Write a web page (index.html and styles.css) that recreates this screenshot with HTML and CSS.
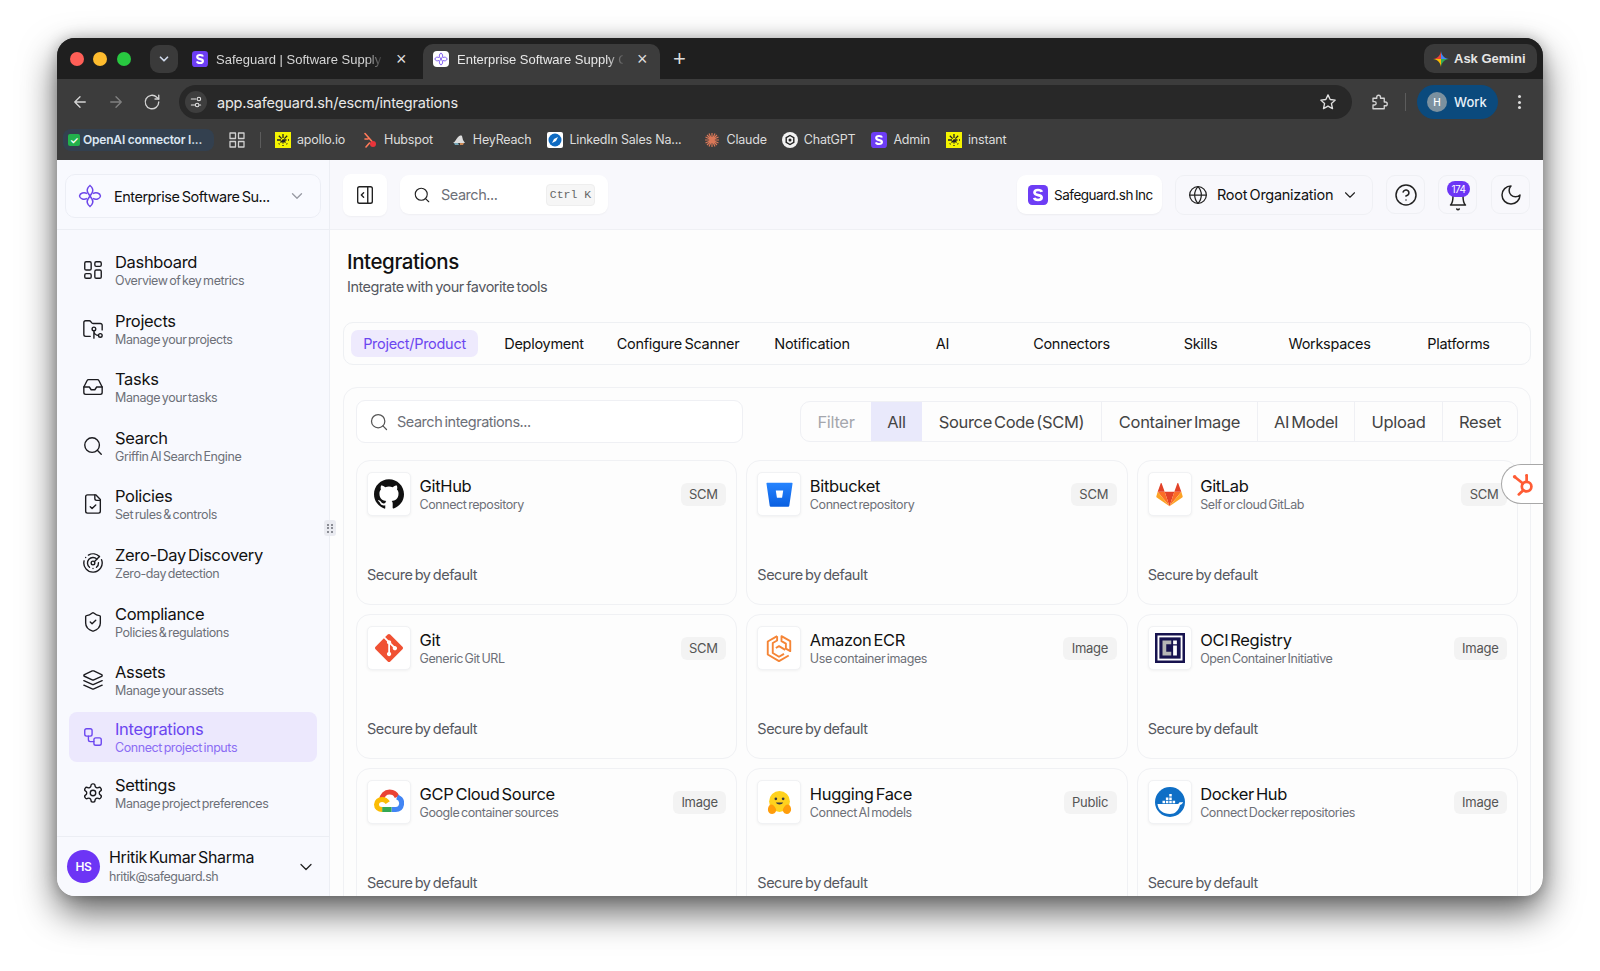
FILE: index.html
```html
<!DOCTYPE html>
<html lang="en">
<head>
    <meta charset="UTF-8">
    <meta name="viewport" content="width=device-width, initial-scale=1.0">
    <title>Integrations - Safeguard</title>
    <link rel="stylesheet" href="styles.css">
</head>
<body>
    <!-- shared icons -->
    <svg class="sprite" xmlns="http://www.w3.org/2000/svg">
        <symbol id="i-search" viewBox="0 0 24 24"><circle cx="11" cy="11" r="8"/><path d="m21 21-4.3-4.3"/></symbol>
        <symbol id="i-chevron" viewBox="0 0 24 24"><path d="m6 9 6 6 6-6"/></symbol>
        <symbol id="logo-s" viewBox="0 0 24 24"><rect width="24" height="24" rx="5" fill="#6d3df5" stroke="none"/><path d="M16.5 8.2C16 6.6 14.4 6 12 6 9.5 6 7.8 7 7.8 9c0 4.5 8.6 1.8 8.6 6 0 2.1-1.9 3-4.4 3-2.5 0-4.100-.8-4.600-2.500" fill="none" stroke="#fff" stroke-width="3.2"/></symbol>
        <symbol id="logo-knot" viewBox="0 0 24 24"><path d="M12 1.500C9 4 8.500 6.500 10 9l4 6c1.500 2.500 1 5-2 7.500C9 20 8.500 17.500 10 15l4-6c1.500-2.500 1-5-2-7.500z"/><path d="M9 9.500C6 8 2 9 1.500 12c.5 3 4.500 4 7.500 2.500"/><path d="M15 9.500c3-1.500 7-.5 7.500 2.500-.5 3-4.500 4-7.500 2.500"/></symbol>
        <symbol id="logo-apollo" viewBox="0 0 16 16"><rect width="16" height="16" fill="#f4f400" stroke="none"/><path d="M8 2v12M2 8h12M3.800 3.800l8.400 8.400M12.200 3.800l-8.400 8.400" fill="none" stroke="#222" stroke-width="1.3" stroke-dasharray="4 1.5"/></symbol>
    </svg>

    <div class="stage">
        <div class="window">
            <!-- browser chrome -->
            <div class="titlebar">
                <span class="light light-red"></span>
                <span class="light light-yellow"></span>
                <span class="light light-green"></span>
                <span class="tab-list"><svg class="ico ico-14 bold"><use href="#i-chevron"/></svg></span>
                <div class="tab tab-idle">
                    <svg class="favicon"><use href="#logo-s"/></svg>
                    <span class="tab-text">Safeguard | Software Supply C</span>
                    <span class="tab-close">×</span>
                </div>
                <div class="tab tab-active">
                    <span class="favicon favicon-white"><svg class="knot-mini"><use href="#logo-knot"/></svg></span>
                    <span class="tab-text">Enterprise Software Supply C</span>
                    <span class="tab-close">×</span>
                </div>
                <span class="tab-new">+</span>
                <div class="gemini">
                    <svg class="gemini-star" viewBox="0 0 24 24">
                        <path d="M12 0c.6 6.500 5.500 11.400 12 12H12V0z" fill="#4285f4"/>
                        <path d="M12 0C11.400 6.500 6.500 11.400 0 12h12V0z" fill="#ea4335"/>
                        <path d="M0 12c6.500.6 11.400 5.500 12 12V12H0z" fill="#fbbc04"/>
                        <path d="M12 24c.6-6.500 5.500-11.400 12-12H12v12z" fill="#34a853"/>
                    </svg>
                    Ask Gemini
                </div>
            </div>

            <div class="toolbar">
                <span class="tool-btn"><svg class="ico ico-18" viewBox="0 0 24 24"><path d="M19 12H5M12 19l-7-7 7-7"/></svg></span>
                <span class="tool-btn tool-dim"><svg class="ico ico-18" viewBox="0 0 24 24"><path d="M5 12h14M12 5l7 7-7 7"/></svg></span>
                <span class="tool-btn"><svg class="ico ico-18" viewBox="0 0 24 24"><path d="M21 12a9 9 0 1 1-2.700-6.400L21 8"/><path d="M21 3v5h-5"/></svg></span>
                <div class="omnibox">
                    <span class="tune"><svg class="ico ico-14" viewBox="0 0 24 24"><path d="M4 7h8M4 17h6M18 17h2"/><circle cx="17" cy="7" r="3"/><circle cx="14" cy="17" r="3"/></svg></span>
                    <span class="url">app.safeguard.sh/escm/integrations</span>
                    <svg class="ico ico-18 star" viewBox="0 0 24 24"><path d="M12 2.500l2.900 6.200 6.700.8-5 4.600 1.400 6.700-6-3.400-6 3.400 1.400-6.700-5-4.600 6.700-.8z"/></svg>
                </div>
                <svg class="ico ico-18 puzzle" viewBox="0 0 24 24"><path d="M4 7h5V5.500a2.500 2.500 0 0 1 5 0V7h5v5h1.500a2.500 2.500 0 0 1 0 5H19v4H4v-5h2a2 2 0 0 0 0-4.500H4z"/></svg>
                <span class="tool-sep"></span>
                <div class="work-pill"><span class="work-avatar">H</span>Work</div>
                <span class="tool-dots"><i></i><i></i><i></i></span>
            </div>

            <div class="bookmarks">
                <span class="bm-chip"><span class="bm-check">✓</span>OpenAI connector I...</span>
                <svg class="bm-apps ico" viewBox="0 0 16 16"><rect x="1" y="1" width="5.5" height="5.5"/><rect x="9.500" y="1" width="5.5" height="5.5"/><rect x="1" y="9.500" width="5.5" height="5.5"/><rect x="9.500" y="9.500" width="5.5" height="5.5"/></svg>
                <span class="bm-sep"></span>
                <span class="bm bm-apollo"><svg class="bm-icon"><use href="#logo-apollo"/></svg>apollo.io</span>
                <span class="bm bm-hubspot"><svg class="bm-icon" viewBox="0 0 16 16"><path d="M3 1.500l7 8M3 7h3M4 15l3.500-4" fill="none" stroke="#ff7a59" stroke-width="1.6" stroke-linecap="round"/><circle cx="11" cy="12" r="3" fill="#e8343b"/></svg>Hubspot</span>
                <span class="bm bm-heyreach"><svg class="bm-icon" viewBox="0 0 16 16"><path d="M2 11c2-1 3-4 5-6 1-1 3-2 4-1l1 4 2 3z" fill="#ddd"/><path d="M3 11h4l1 2H4z" fill="#7ab"/><path d="M9 11h4l-1 2H9z" fill="#c85"/></svg>HeyReach</span>
                <span class="bm bm-linkedin"><svg class="bm-icon" viewBox="0 0 16 16"><rect width="16" height="16" rx="2" fill="#fff"/><circle cx="8" cy="8" r="6.5" fill="#0f6bc2"/><path d="M11 5l-2 4-4 2 2-4z" fill="#fff"/></svg>LinkedIn Sales Na...</span>
                <span class="bm bm-claude"><svg class="bm-icon" viewBox="0 0 16 16"><path d="M8 1v14M1 8h14M3 3l10 10M13 3L3 13M5 1.500l6 13M11 1.500l-6 13M1.500 5l13 6M14.500 5l-13 6" stroke="#d97757" stroke-width="1.2"/></svg>Claude</span>
                <span class="bm bm-chatgpt"><svg class="bm-icon" viewBox="0 0 16 16"><circle cx="8" cy="8" r="8" fill="#f1f1f1"/><path d="M8 3.500l3.800 2.200v4.600L8 12.500l-3.800-2.200V5.700z" fill="none" stroke="#222" stroke-width="1.4"/><circle cx="8" cy="8" r="1.5" fill="#222"/></svg>ChatGPT</span>
                <span class="bm bm-admin"><svg class="bm-icon"><use href="#logo-s"/></svg>Admin</span>
                <span class="bm bm-instant"><svg class="bm-icon"><use href="#logo-apollo"/></svg>instant</span>
            </div>

            <!-- application -->
            <div class="app">
                <aside class="sidebar">
                    <div class="side-head">
                        <div class="project-select">
                            <svg class="knot"><use href="#logo-knot"/></svg>
                            <span class="project-name">Enterprise Software Su...</span>
                            <svg class="ico ico-18 muted"><use href="#i-chevron"/></svg>
                        </div>
                    </div>
                    <nav class="nav">
                        <a class="nav-item">
                            <svg class="nav-icon" viewBox="0 0 24 24"><rect x="3" y="3" width="7" height="9" rx="1.5"/><rect x="14" y="3" width="7" height="5" rx="1.5"/><rect x="14" y="12" width="7" height="9" rx="1.5"/><rect x="3" y="16" width="7" height="5" rx="1.5"/></svg>
                            <span class="nav-text"><b>Dashboard</b><small>Overview of key metrics</small></span>
                        </a>
                        <a class="nav-item">
                            <svg class="nav-icon" viewBox="0 0 24 24"><path d="M9 20H4a2 2 0 0 1-2-2V5a2 2 0 0 1 2-2h3.900a2 2 0 0 1 1.690.9l.81 1.200a2 2 0 0 0 1.670.9H20a2 2 0 0 1 2 2v5"/><circle cx="13" cy="12" r="2"/><path d="M18 19c-2.800 0-5-2.200-5-5v8"/><circle cx="20" cy="19" r="2"/></svg>
                            <span class="nav-text"><b>Projects</b><small>Manage your projects</small></span>
                        </a>
                        <a class="nav-item">
                            <svg class="nav-icon" viewBox="0 0 24 24"><path d="M22 12h-6l-2 3h-4l-2-3H2"/><path d="M5.450 5.110 2 12v6a2 2 0 0 0 2 2h16a2 2 0 0 0 2-2v-6l-3.450-6.890A2 2 0 0 0 16.760 4H7.240a2 2 0 0 0-1.790 1.110z"/></svg>
                            <span class="nav-text"><b>Tasks</b><small>Manage your tasks</small></span>
                        </a>
                        <a class="nav-item">
                            <svg class="nav-icon"><use href="#i-search"/></svg>
                            <span class="nav-text"><b>Search</b><small>Griffin AI Search Engine</small></span>
                        </a>
                        <a class="nav-item">
                            <svg class="nav-icon" viewBox="0 0 24 24"><path d="M15 2H6a2 2 0 0 0-2 2v16a2 2 0 0 0 2 2h12a2 2 0 0 0 2-2V7Z"/><path d="M14 2v4a2 2 0 0 0 2 2h4"/><path d="m9 15 2 2 4-4"/></svg>
                            <span class="nav-text"><b>Policies</b><small>Set rules &amp; controls</small></span>
                        </a>
                        <a class="nav-item">
                            <svg class="nav-icon" viewBox="0 0 24 24"><path d="M19.070 4.930A10 10 0 0 0 6.990 3.340"/><path d="M4 6h.01"/><path d="M2.290 9.620A10 10 0 1 0 21.310 8.350"/><path d="M16.240 7.760A6 6 0 1 0 8.230 16.670"/><path d="M12 18h.01"/><path d="M17.990 11.660A6 6 0 0 1 15.770 16.670"/><circle cx="12" cy="12" r="2"/><path d="m13.410 10.590 5.660-5.660"/></svg>
                            <span class="nav-text"><b>Zero-Day Discovery</b><small>Zero-day detection</small></span>
                        </a>
                        <a class="nav-item">
                            <svg class="nav-icon" viewBox="0 0 24 24"><path d="M20 13c0 5-3.500 7.500-7.660 8.950a1 1 0 0 1-.67-.01C7.500 20.500 4 18 4 13V6a1 1 0 0 1 1-1c2 0 4.500-1.200 6.240-2.720a1.170 1.170 0 0 1 1.520 0C14.510 3.810 17 5 19 5a1 1 0 0 1 1 1z"/><path d="m9 12 2 2 4-4"/></svg>
                            <span class="nav-text"><b>Compliance</b><small>Policies &amp; regulations</small></span>
                        </a>
                        <a class="nav-item">
                            <svg class="nav-icon" viewBox="0 0 24 24"><path d="M12.830 2.180a2 2 0 0 0-1.660 0L2.600 6.080a1 1 0 0 0 0 1.830l8.580 3.910a2 2 0 0 0 1.660 0l8.580-3.900a1 1 0 0 0 0-1.830Z"/><path d="m22 17.650-9.170 4.160a2 2 0 0 1-1.660 0L2 17.650"/><path d="m22 12.650-9.170 4.160a2 2 0 0 1-1.660 0L2 12.650"/></svg>
                            <span class="nav-text"><b>Assets</b><small>Manage your assets</small></span>
                        </a>
                        <a class="nav-item nav-active">
                            <svg class="nav-icon" viewBox="0 0 24 24"><rect x="3" y="3" width="8" height="8" rx="2"/><path d="M7 11v4a2 2 0 0 0 2 2h4"/><rect x="13" y="13" width="8" height="8" rx="2"/></svg>
                            <span class="nav-text"><b>Integrations</b><small>Connect project inputs</small></span>
                        </a>
                        <a class="nav-item">
                            <svg class="nav-icon" viewBox="0 0 24 24"><path d="M12.220 2h-.44a2 2 0 0 0-2 2v.18a2 2 0 0 1-1 1.730l-.43.25a2 2 0 0 1-2 0l-.15-.08a2 2 0 0 0-2.730.73l-.22.38a2 2 0 0 0 .73 2.730l.15.1a2 2 0 0 1 1 1.720v.51a2 2 0 0 1-1 1.740l-.15.09a2 2 0 0 0-.73 2.730l.22.38a2 2 0 0 0 2.730.73l.15-.08a2 2 0 0 1 2 0l.43.25a2 2 0 0 1 1 1.730V20a2 2 0 0 0 2 2h.44a2 2 0 0 0 2-2v-.18a2 2 0 0 1 1-1.730l.43-.25a2 2 0 0 1 2 0l.15.08a2 2 0 0 0 2.730-.73l.22-.39a2 2 0 0 0-.73-2.730l-.15-.08a2 2 0 0 1-1-1.740v-.5a2 2 0 0 1 1-1.740l.15-.09a2 2 0 0 0 .73-2.730l-.22-.38a2 2 0 0 0-2.730-.73l-.15.08a2 2 0 0 1-2 0l-.43-.25a2 2 0 0 1-1-1.730V4a2 2 0 0 0-2-2z"/><circle cx="12" cy="12" r="3"/></svg>
                            <span class="nav-text"><b>Settings</b><small>Manage project preferences</small></span>
                        </a>
                    </nav>
                    <div class="profile">
                        <span class="avatar">HS</span>
                        <span class="profile-text"><b>Hritik Kumar Sharma</b><small>hritik@safeguard.sh</small></span>
                        <svg class="ico ico-20 dark"><use href="#i-chevron"/></svg>
                    </div>
                </aside>

                <main class="main">
                    <header class="topbar">
                        <span class="collapse-btn"><svg class="ico ico-22 dark" viewBox="0 0 24 24"><rect x="4" y="3" width="16" height="18" rx="2"/><path d="M15 3v18M10.500 9.500 8 12l2.500 2.500"/></svg></span>
                        <div class="top-search">
                            <svg class="ico ico-18 dark"><use href="#i-search"/></svg>
                            <span class="top-search-text">Search...</span>
                            <kbd class="kbd">Ctrl K</kbd>
                        </div>
                        <div class="org-chip">
                            <svg class="org-logo"><use href="#logo-s"/></svg>
                            Safeguard.sh Inc
                        </div>
                        <div class="org-select">
                            <svg class="ico ico-20 dark" viewBox="0 0 24 24"><circle cx="12" cy="12" r="10"/><path d="M12 2a14.500 14.500 0 0 0 0 20 14.500 14.500 0 0 0 0-20"/><path d="M2 12h20"/></svg>
                            <span class="org-name">Root Organization</span>
                            <svg class="ico ico-18 dark"><use href="#i-chevron"/></svg>
                        </div>
                        <span class="icon-btn"><svg class="ico ico-24 dark" viewBox="0 0 24 24"><circle cx="12" cy="12" r="10"/><path d="M9.090 9a3 3 0 0 1 5.830 1c0 2-3 3-3 3"/><path d="M12 17h.01"/></svg></span>
                        <span class="icon-btn icon-bell">
                            <svg class="ico ico-24 dark" viewBox="0 0 24 24"><path d="M7 8a5 5 0 0 1 10 0c0 7 2.500 9 2.500 9h-15S7 15 7 8"/><path d="M10.800 21a1.400 1.400 0 0 0 2.400 0"/></svg>
                            <span class="bell-badge">174</span>
                        </span>
                        <span class="icon-btn"><svg class="ico ico-24 dark" viewBox="0 0 24 24"><path d="M12 3a6 6 0 0 0 9 9 9 9 0 1 1-9-9Z"/></svg></span>
                    </header>

                    <section class="content">
                        <h1 class="page-title">Integrations</h1>
                        <p class="page-sub">Integrate with your favorite tools</p>

                        <div class="tabs">
                            <span class="tab-item tab-item-on">Project/Product</span>
                            <span class="tab-item">Deployment</span>
                            <span class="tab-item">Configure Scanner</span>
                            <span class="tab-item">Notification</span>
                            <span class="tab-item">AI</span>
                            <span class="tab-item">Connectors</span>
                            <span class="tab-item">Skills</span>
                            <span class="tab-item">Workspaces</span>
                            <span class="tab-item">Platforms</span>
                        </div>

                        <div class="panel">
                            <div class="panel-bar">
                                <div class="int-search">
                                    <svg class="ico ico-20 muted-dark"><use href="#i-search"/></svg>
                                    Search integrations...
                                </div>
                                <div class="segments">
                                    <span class="seg seg-filter">Filter</span>
                                    <span class="seg seg-all">All</span>
                                    <span class="seg seg-scm">Source Code (SCM)</span>
                                    <span class="seg seg-image">Container Image</span>
                                    <span class="seg seg-model">AI Model</span>
                                    <span class="seg seg-upload">Upload</span>
                                    <span class="seg seg-reset">Reset</span>
                                </div>
                            </div>

                            <div class="cards">
                                <article class="card">
                                    <div class="card-head">
                                        <span class="logo-box"><svg class="logo" viewBox="0 0 24 24"><path fill="#111" d="M12 .297c-6.630 0-12 5.373-12 12 0 5.303 3.438 9.800 8.205 11.385.6.113.82-.258.82-.577 0-.285-.01-1.040-.015-2.040-3.338.724-4.042-1.610-4.042-1.610C4.422 18.070 3.633 17.700 3.633 17.700c-1.087-.744.084-.729.084-.729 1.205.084 1.838 1.236 1.838 1.236 1.070 1.835 2.809 1.305 3.495.998.108-.776.417-1.305.76-1.605-2.665-.3-5.466-1.332-5.466-5.930 0-1.310.465-2.380 1.235-3.220-.135-.303-.54-1.523.105-3.176 0 0 1.005-.322 3.300 1.230.96-.267 1.980-.399 3-.405 1.020.006 2.040.138 3 .405 2.280-1.552 3.285-1.230 3.285-1.230.645 1.653.24 2.873.12 3.176.765.84 1.230 1.910 1.230 3.220 0 4.610-2.805 5.625-5.475 5.920.42.36.81 1.096.81 2.220 0 1.606-.015 2.896-.015 3.286 0 .315.21.69.825.57C20.565 22.092 24 17.592 24 12.297c0-6.627-5.373-12-12-12"/></svg></span>
                                        <div class="card-text"><h3>GitHub</h3><p>Connect repository</p></div>
                                        <span class="badge">SCM</span>
                                    </div>
                                    <div class="card-foot">Secure by default</div>
                                </article>
                                <article class="card">
                                    <div class="card-head">
                                        <span class="logo-box"><svg class="logo logo-sm" viewBox="0 0 24 24"><defs><linearGradient id="bb" x1="0" y1="0" x2="0" y2="1"><stop offset="0" stop-color="#2684ff"/><stop offset="1" stop-color="#0a5fe0"/></linearGradient></defs><path fill="url(#bb)" d="M1 1.500h22a.6.6 0 0 1 .6.7L20.700 22a1 1 0 0 1-1 .8H4.300a1 1 0 0 1-1-.8L.4 2.200a.6.6 0 0 1 .6-.7z"/><path fill="#fff" d="M8.700 8.500h6.600l-1 6.300H9.700z"/></svg></span>
                                        <div class="card-text"><h3>Bitbucket</h3><p>Connect repository</p></div>
                                        <span class="badge">SCM</span>
                                    </div>
                                    <div class="card-foot">Secure by default</div>
                                </article>
                                <article class="card">
                                    <div class="card-head">
                                        <span class="logo-box"><svg class="logo logo-sm" viewBox="0 0 24 24"><path fill="#e24329" d="M12 22.500 7.700 9.500h8.600z"/><path fill="#fc6d26" d="M12 22.500 7.700 9.500H1.500z"/><path fill="#fca326" d="M1.500 9.500.3 13.600c-.1.4 0 .8.400 1L12 22.500z"/><path fill="#e24329" d="M1.500 9.500h6.200L5 2c-.1-.4-.7-.4-.8 0z"/><path fill="#fc6d26" d="M12 22.500l4.300-13h6.200z"/><path fill="#fca326" d="M22.500 9.500l1.200 4.100c.1.4 0 .8-.4 1L12 22.500z"/><path fill="#e24329" d="M22.500 9.500h-6.200L19 2c.1-.4.7-.4.8 0z"/></svg></span>
                                        <div class="card-text"><h3>GitLab</h3><p>Self or cloud GitLab</p></div>
                                        <span class="badge">SCM</span>
                                    </div>
                                    <div class="card-foot">Secure by default</div>
                                </article>
                                <article class="card">
                                    <div class="card-head">
                                        <span class="logo-box"><svg class="logo logo-git" viewBox="0 0 24 24"><path fill="#f05133" d="M23.546 10.930L13.067.452c-.604-.603-1.582-.603-2.188 0L8.708 2.627l2.760 2.760c.645-.215 1.379-.07 1.889.441.516.515.658 1.258.438 1.900l2.658 2.660c.645-.223 1.387-.078 1.900.435.721.72.721 1.884 0 2.604-.719.719-1.881.719-2.600 0-.539-.541-.674-1.337-.404-1.996L12.860 8.955v6.525c.176.086.342.203.488.348.713.721.713 1.883 0 2.600-.719.721-1.889.721-2.609 0-.719-.719-.719-1.879 0-2.598.182-.18.387-.316.605-.406V8.835c-.217-.091-.424-.222-.6-.401-.545-.545-.676-1.342-.396-2.009L7.636 3.700.45 10.881c-.6.605-.6 1.584 0 2.189l10.480 10.477c.604.604 1.582.604 2.186 0l10.430-10.430c.605-.603.605-1.582 0-2.187"/></svg></span>
                                        <div class="card-text"><h3>Git</h3><p>Generic Git URL</p></div>
                                        <span class="badge">SCM</span>
                                    </div>
                                    <div class="card-foot">Secure by default</div>
                                </article>
                                <article class="card">
                                    <div class="card-head">
                                        <span class="logo-box"><svg class="logo" viewBox="0 0 24 24" fill="none" stroke="#f58536" stroke-width="1.500" stroke-linejoin="round"><path d="M10.500 2.500 3 6.800v10.400L12 22.500l7.800-4.500"/><path d="M10.500 2.500V6L7 8v8l5 3 4-2.300"/><path d="M14 2.500l7 4v8L17.500 12.500V8.500L14 6.500z"/><path d="M9.500 12 12 10.500l5 3"/></svg></span>
                                        <div class="card-text"><h3>Amazon ECR</h3><p>Use container images</p></div>
                                        <span class="badge">Image</span>
                                    </div>
                                    <div class="card-foot">Secure by default</div>
                                </article>
                                <article class="card">
                                    <div class="card-head">
                                        <span class="logo-box"><svg class="logo" viewBox="0 0 24 24"><rect x="0" y="0" width="24" height="24" fill="#17134f"/><rect x="2" y="2" width="20" height="20" fill="#fff"/><rect x="3.500" y="3.500" width="17" height="17" fill="#17134f"/><path fill="#b5b5b5" d="M6 6h7v3H9v6h4v3H6z"/><rect x="14.500" y="6" width="3" height="3" fill="#fff"/><rect x="14.500" y="10" width="3" height="8" fill="#fff"/></svg></span>
                                        <div class="card-text"><h3>OCI Registry</h3><p>Open Container Initiative</p></div>
                                        <span class="badge">Image</span>
                                    </div>
                                    <div class="card-foot">Secure by default</div>
                                </article>
                                <article class="card">
                                    <div class="card-head">
                                        <span class="logo-box"><svg class="logo" viewBox="0 0 24 24" fill="none" stroke-width="4"><path stroke="#ea4335" d="M6 10.500C6.500 6.500 9 4 12.500 4c2.800 0 5 1.500 6 4"/><path stroke="#4285f4" d="M18.500 8c2.500 1 4 3.300 3.500 6-.4 2.300-2 4-4.500 4H14"/><path stroke="#34a853" d="M14 18H6.500"/><path stroke="#fbbc04" d="M6.500 18C3.800 18 2 16.300 2 14s2-4 4.500-4c2 0 3.500 1 4.500 2.500"/></svg></span>
                                        <div class="card-text"><h3>GCP Cloud Source</h3><p>Google container sources</p></div>
                                        <span class="badge">Image</span>
                                    </div>
                                    <div class="card-foot">Secure by default</div>
                                </article>
                                <article class="card">
                                    <div class="card-head">
                                        <span class="logo-box"><svg class="logo logo-hf" viewBox="0 0 24 24"><circle cx="12" cy="11" r="10" fill="#ffd21e"/><circle cx="8.500" cy="8.500" r="1.300" fill="#3a3b45"/><circle cx="15.500" cy="8.500" r="1.300" fill="#3a3b45"/><path d="M8.500 12c1 2.500 6 2.500 7 0z" fill="#3a3b45"/><path d="M1 20c-.5-3 1-6 3-6s3.500 2 4.500 4c1 2.500-1 5-3.500 5S1.500 22 1 20z" fill="#ff9d0b"/><path d="M23 20c.5-3-1-6-3-6s-3.500 2-4.500 4c-1 2.500 1 5 3.500 5s3-1 4-3z" fill="#ff9d0b"/></svg></span>
                                        <div class="card-text"><h3>Hugging Face</h3><p>Connect AI models</p></div>
                                        <span class="badge">Public</span>
                                    </div>
                                    <div class="card-foot">Secure by default</div>
                                </article>
                                <article class="card">
                                    <div class="card-head">
                                        <span class="logo-box"><svg class="logo" viewBox="0 0 24 24"><circle cx="12" cy="12" r="12" fill="#0f6fc6"/><path fill="#fff" d="M2 13.500h16c1 0 1.500-.8 1.700-1.500.8.3 1.800.2 2.800-.1-.4 1.200-1.300 2.100-2.500 2.400C19 18.800 16 21.500 12 21.500c-5.500 0-9.500-3-10-8z"/><path fill="#fff" d="M6 11h2v2H6zM8.700 11h2v2h-2zM11.400 11h2v2h-2zM14.100 11h2v2h-2zM8.700 8.300h2v2h-2zM11.400 8.300h2v2h-2zM11.400 5.600h2v2h-2z"/></svg></span>
                                        <div class="card-text"><h3>Docker Hub</h3><p>Connect Docker repositories</p></div>
                                        <span class="badge">Image</span>
                                    </div>
                                    <div class="card-foot">Secure by default</div>
                                </article>
                            </div>
                        </div>
                    </section>
                </main>

                <span class="drag-handle"><i></i><i></i><i></i><i></i><i></i><i></i></span>
                <span class="hubspot-tab"><svg viewBox="0 0 24 24" fill="none" stroke="#ff5c35" stroke-width="2.600" stroke-linecap="round"><circle cx="15" cy="14" r="4.600"/><path d="M15 9V3.500M11.500 11 4 5M11.800 17.500 7.500 21.500"/><circle cx="15" cy="3" r="1.200" fill="#ff5c35" stroke="none"/><circle cx="3.500" cy="4.500" r="1.700" fill="#ff5c35" stroke="none"/></svg></span>
            </div>
        </div>
    </div>
</body>
</html>
```
FILE: styles.css
```css
* {
    margin: 0;
    padding: 0;
    box-sizing: border-box;
}
html, body {
    height: 100%;
    background: #fff;
    overflow: hidden;
}
body {
    font-family: Inter, "Liberation Sans", sans-serif;
    color: #111;
}
.sprite {
    position: absolute;
    width: 0;
    height: 0;
}
.ico {
    fill: none;
    stroke: currentColor;
    stroke-width: 1.8;
    stroke-linecap: round;
    stroke-linejoin: round;
    flex: none;
}
.ico-14 { width: 14px; height: 14px; }
.ico-18 { width: 18px; height: 18px; }
.ico-20 { width: 20px; height: 20px; }
.ico-22 { width: 22px; height: 22px; }
.ico-24 { width: 24px; height: 24px; }
.bold { stroke-width: 3; }
.muted { color: #9a9ca5; }
.dark { color: #222; stroke-width: 1.5; }
.muted-dark { color: #555; stroke-width: 1.5; }

.stage {
    padding: 38px 57px 0;
}
.window {
    height: 858px;
    border-radius: 18px;
    overflow: hidden;
    display: flex;
    flex-direction: column;
    background: #3c3c3c;
    box-shadow: 0 16px 36px rgba(0, 0, 0, 0.62), 0 0 14px rgba(0, 0, 0, 0.22);
}

/* browser chrome */
.titlebar {
    height: 41px;
    background: #1f1f1f;
    display: flex;
    align-items: flex-start;
    padding-left: 12.5px;
    color: #d6d6d6;
    font-family: "Liberation Sans", sans-serif;
    font-size: 13px;
    flex: none;
}
.light {
    width: 14px;
    height: 14px;
    border-radius: 50%;
    margin-top: 14px;
    margin-right: 9.5px;
}
.light-red { background: #ff5f57; }
.light-yellow { background: #febc2e; }
.light-green { background: #28c840; }
.tab-list {
    width: 28px;
    height: 28px;
    margin: 7px 0 0 10px;
    border-radius: 9px;
    background: #3a3a3a;
    display: flex;
    align-items: center;
    justify-content: center;
    color: #cfd8ea;
}
.tab {
    height: 35px;
    margin-top: 6px;
    padding-bottom: 5px;
    display: flex;
    align-items: center;
    border-radius: 10px 10px 0 0;
}
.tab-idle {
    width: 245px;
    padding-left: 14px;
}
.tab-active {
    width: 237px;
    padding-left: 10px;
    background: #3c3c3c;
    color: #e8e8e8;
}
.favicon {
    width: 16px;
    height: 16px;
    flex: none;
}
.favicon-white {
    background: #fff;
    border-radius: 4px;
    display: flex;
    align-items: center;
    justify-content: center;
}
.knot-mini {
    width: 14px;
    height: 14px;
    fill: none;
    stroke: #7a55f0;
    stroke-width: 1.6;
}
.tab-text {
    margin-left: 8px;
    width: 166px;
    white-space: nowrap;
    -webkit-mask-image: linear-gradient(90deg, #000 150px, transparent 168px);
    mask-image: linear-gradient(90deg, #000 150px, transparent 168px);
}
.tab-close {
    margin-left: 14px;
    font-size: 18px;
    line-height: 1;
    color: #ddd;
}
.tab-new {
    margin: 8px 0 0 13px;
    font-size: 22px;
    line-height: 26px;
    color: #ddd;
}
.gemini {
    margin: 6px 6px 0 auto;
    width: 113px;
    height: 29px;
    border-radius: 10px;
    background: #3a3a3a;
    display: flex;
    align-items: center;
    padding-left: 9px;
    gap: 5px;
    color: #e6e6e6;
    font-size: 13px;
    font-weight: 700;
}
.gemini-star {
    width: 16px;
    height: 16px;
}
.toolbar {
    height: 46px;
    padding: 6px 0 6px 5px;
    display: flex;
    align-items: center;
    color: #d4d4d4;
    flex: none;
}
.tool-btn {
    width: 36px;
    display: flex;
    justify-content: center;
}
.tool-dim { color: #808080; }
.omnibox {
    margin-left: 9px;
    width: 1173px;
    height: 34px;
    border-radius: 17px;
    background: #282828;
    display: flex;
    align-items: center;
    padding-left: 6px;
}
.tune {
    width: 22px;
    height: 22px;
    border-radius: 50%;
    background: #3e3e3e;
    display: flex;
    align-items: center;
    justify-content: center;
    color: #e6e6e6;
}
.url {
    margin-left: 10px;
    font-size: 14.5px;
    color: #e8e8e8;
    letter-spacing: -0.2px;
}
.star {
    margin-left: auto;
    margin-right: 15px;
    color: #e0e0e0;
}
.puzzle { margin-left: 18px; }
.tool-sep {
    width: 1px;
    height: 18px;
    background: #5c5c5c;
    margin-left: 17px;
}
.work-pill {
    margin-left: 11px;
    width: 81px;
    height: 34px;
    border-radius: 17px;
    background: #0b4a7d;
    display: flex;
    align-items: center;
    padding-left: 10px;
    gap: 7px;
    font-size: 13px;
    font-weight: 500;
    color: #e8f0f8;
}
.work-avatar {
    width: 20px;
    height: 20px;
    border-radius: 50%;
    background: #7c919f;
    font-size: 10px;
    display: flex;
    align-items: center;
    justify-content: center;
    color: #fff;
}
.tool-dots {
    margin-left: 20px;
    display: flex;
    flex-direction: column;
    gap: 2.5px;
}
.tool-dots i {
    width: 3px;
    height: 3px;
    border-radius: 50%;
    background: #ddd;
}
.bookmarks {
    height: 35px;
    padding: 0 0 6px 6px;
    display: flex;
    align-items: center;
    font-size: 12.5px;
    letter-spacing: -0.2px;
    color: #dcdcdc;
    flex: none;
}
.bm-chip {
    width: 151px;
    height: 22px;
    border-radius: 8px;
    background: #33404f;
    display: flex;
    align-items: center;
    padding-left: 5px;
    gap: 3px;
    color: #dbe6f2;
    font-size: 12px;
    font-weight: 600;
    white-space: nowrap;
}
.bm-check {
    width: 12px;
    height: 12px;
    background: #22b14c;
    color: #fff;
    font-size: 10px;
    line-height: 12px;
    text-align: center;
    border-radius: 2px;
}
.bm-apps {
    width: 16px;
    height: 16px;
    margin-left: 15px;
    color: #d0d0d0;
    stroke-width: 1.3;
}
.bm-sep {
    width: 1px;
    height: 16px;
    background: #5c5c5c;
    margin-left: 15px;
}
.bm {
    display: flex;
    align-items: center;
    gap: 6px;
    white-space: nowrap;
}
.bm-icon {
    width: 16px;
    height: 16px;
    flex: none;
}
.bm-apollo { margin-left: 14px; }
.bm-hubspot { margin-left: 17px; }
.bm-heyreach { margin-left: 18px; }
.bm-linkedin { margin-left: 16px; }
.bm-claude { margin-left: 23px; }
.bm-chatgpt { margin-left: 15px; }
.bm-admin { margin-left: 16px; }
.bm-instant { margin-left: 16px; }

/* application */
.app {
    flex: 1;
    min-height: 0;
    display: flex;
    position: relative;
    background: #fdfdfd;
    letter-spacing: -0.03em;
    word-spacing: -0.08em;
}
.sidebar {
    width: 273px;
    flex: none;
    background: #f8f9fe;
    border-right: 1px solid #eceef4;
    display: flex;
    flex-direction: column;
}
.side-head {
    height: 70px;
    padding: 14px 8px;
    border-bottom: 1px solid #eceef4;
    flex: none;
}
.project-select {
    width: 256px;
    height: 44px;
    border: 1px solid #eceef5;
    border-radius: 10px;
    background: #f9faff;
    display: flex;
    align-items: center;
    padding: 0 14px 0 12px;
}
.knot {
    width: 24px;
    height: 24px;
    fill: none;
    stroke: #6d46ea;
    stroke-width: 1.5;
    flex: none;
}
.project-name {
    margin-left: 12px;
    flex: 1;
    font-size: 14.5px;
    white-space: nowrap;
}
.nav {
    flex: 1;
    padding: 15px 0 0 12px;
    display: flex;
    flex-direction: column;
    gap: 7px;
}
.nav-item {
    width: 248px;
    height: 51.6px;
    padding: 7px 0 0 13px;
    display: flex;
    gap: 11px;
    border-radius: 8px;
}
.nav-icon {
    width: 22px;
    height: 22px;
    margin-top: 7px;
    fill: none;
    stroke: #1b1b1f;
    stroke-width: 1.5;
    stroke-linecap: round;
    stroke-linejoin: round;
    flex: none;
}
.nav-text {
    display: flex;
    flex-direction: column;
    white-space: nowrap;
}
.nav-text b {
    font-weight: 400;
    font-size: 16.5px;
    line-height: 20px;
    letter-spacing: -0.02em;
    word-spacing: -0.14em;
}
.nav-text small {
    font-size: 12.5px;
    line-height: 18px;
    color: #6d7078;
    letter-spacing: -0.033em;
    word-spacing: -0.12em;
}
.nav-active {
    height: 50px;
    margin: -1.6px 0 -1.4px;
    background: #ece8fd;
}
.nav-active .nav-icon { stroke: #6b46f0; }
.nav-active .nav-text b { color: #6b46f0; }
.nav-active .nav-text small { color: #8b6cf4; }
.profile {
    height: 60px;
    border-top: 1px solid #eceef4;
    padding: 0 0 0 10px;
    display: flex;
    align-items: center;
    flex: none;
}
.avatar {
    width: 33px;
    height: 33px;
    border-radius: 50%;
    background: #6d35f5;
    color: #fff;
    font-size: 12px;
    font-weight: 600;
    display: flex;
    align-items: center;
    justify-content: center;
    flex: none;
}
.profile-text {
    margin-left: 9px;
    display: flex;
    flex-direction: column;
    gap: 1px;
    white-space: nowrap;
    width: 187px;
}
.profile-text b {
    font-weight: 400;
    font-size: 16px;
    line-height: 20px;
    letter-spacing: -0.02em;
    word-spacing: -0.14em;
}
.profile-text small {
    font-size: 12.5px;
    line-height: 18px;
    color: #6d7078;
}
.main {
    flex: 1;
    min-width: 0;
    display: flex;
    flex-direction: column;
}
.topbar {
    height: 70px;
    background: #f8f8fc;
    border-bottom: 1px solid #eff0f4;
    padding: 0 13px;
    display: flex;
    align-items: center;
    flex: none;
}
.collapse-btn {
    width: 44px;
    height: 42px;
    border-radius: 8px;
    background: #fff;
    display: flex;
    align-items: center;
    justify-content: center;
    box-shadow: 0 1px 2px rgba(0, 0, 0, 0.04);
}
.top-search {
    width: 208px;
    height: 39px;
    margin-left: 13px;
    border-radius: 9px;
    background: #fff;
    padding: 0 13px;
    display: flex;
    align-items: center;
    box-shadow: 0 1px 2px rgba(0, 0, 0, 0.04);
}
.top-search-text {
    margin-left: 10px;
    flex: 1;
    font-size: 14.5px;
    color: #6d7078;
}
.kbd {
    width: 49px;
    height: 22px;
    border: 1px solid #eeeeee;
    border-radius: 4px;
    background: #f6f6f6;
    font-family: "Liberation Mono", monospace;
    font-size: 11.5px;
    letter-spacing: 0;
    word-spacing: 0;
    line-height: 20px;
    text-align: center;
    color: #666;
}
.org-chip {
    margin-left: auto;
    width: 145px;
    height: 39px;
    border-radius: 9px;
    background: #fff;
    display: flex;
    align-items: center;
    padding-left: 11px;
    gap: 6px;
    font-size: 13.5px;
    white-space: nowrap;
    box-shadow: 0 1px 2px rgba(0, 0, 0, 0.05);
}
.org-logo {
    width: 20px;
    height: 20px;
    flex: none;
}
.org-select {
    margin-left: 13px;
    width: 198px;
    height: 40px;
    border: 1px solid #eff0f4;
    border-radius: 9px;
    display: flex;
    align-items: center;
    padding-left: 12px;
    font-size: 14.5px;
    letter-spacing: -0.02em;
    white-space: nowrap;
}
.org-name {
    margin-left: 9px;
    width: 124px;
}
.icon-btn {
    margin-left: 13px;
    width: 39px;
    height: 39px;
    border: 1px solid #eff0f4;
    border-radius: 9px;
    display: flex;
    align-items: center;
    justify-content: center;
    position: relative;
}
.icon-btn:last-child { margin-left: 14px; }
.icon-bell svg { margin-top: 10px; }
.bell-badge {
    position: absolute;
    top: 5px;
    left: 8px;
    width: 23px;
    height: 16px;
    border-radius: 8px;
    background: #6d35f5;
    color: #fff;
    font-size: 10px;
    line-height: 16px;
    text-align: center;
}
.content {
    flex: 1;
    min-height: 0;
    padding: 18px 12px 0 13px;
}
.page-title {
    margin-left: 4px;
    font-size: 20.5px;
    font-weight: 500;
    line-height: 28px;
    letter-spacing: -0.02em;
}
.page-sub {
    margin: 1px 0 0 4px;
    font-size: 14.5px;
    line-height: 20px;
    color: #55585f;
}
.tabs {
    margin-top: 25px;
    height: 43px;
    border: 1px solid #eef0f3;
    border-radius: 10px;
    padding: 7px;
    display: grid;
    grid-template-columns: 127px 132px 136px 132px repeat(5, 1fr);
    align-items: stretch;
}
.tab-item {
    display: flex;
    align-items: center;
    justify-content: center;
    font-size: 14.5px;
    letter-spacing: -0.02em;
    border-radius: 7px;
    white-space: nowrap;
}
.tab-item-on {
    background: #eeeafd;
    color: #6b46f0;
}
.panel {
    margin-top: 22px;
    border: 1px solid #f0f1f4;
    border-radius: 14px;
    padding: 12px;
    height: 700px;
}
.panel-bar {
    height: 43px;
    display: flex;
    justify-content: space-between;
    align-items: center;
}
.int-search {
    width: 387px;
    height: 43px;
    border: 1px solid #eff0f4;
    border-radius: 9px;
    background: #fff;
    padding-left: 12px;
    display: flex;
    align-items: center;
    gap: 8px;
    font-size: 14.5px;
    color: #6d7078;
}
.segments {
    height: 41px;
    border: 1px solid #eff0f4;
    border-radius: 10px;
    display: flex;
    overflow: hidden;
    font-size: 16.5px;
    letter-spacing: -0.02em;
    word-spacing: -0.14em;
    color: #444;
}
.seg {
    display: flex;
    align-items: center;
    justify-content: center;
    border-left: 1px solid #eff0f4;
    white-space: nowrap;
}
.seg-filter { width: 70px; border-left: 0; color: #a5a7ad; }
.seg-all { width: 51px; background: #e9e9fb; border-left: 0; }
.seg-scm { width: 179px; border-left: 0; }
.seg-image { width: 156px; }
.seg-model { width: 97px; }
.seg-upload { width: 88px; }
.seg-reset { width: 75px; }
.cards {
    margin-top: 17px;
    display: grid;
    grid-template-columns: repeat(3, 1fr);
    gap: 9px;
}
.card {
    height: 145px;
    border: 1px solid #f0f1f4;
    border-radius: 14px;
    padding: 11px 10px 19px;
    display: flex;
    flex-direction: column;
    justify-content: space-between;
}
.card-head {
    display: flex;
    align-items: flex-start;
}
.logo-box {
    width: 44px;
    height: 44px;
    border: 1px solid #f1f2f4;
    border-radius: 5px;
    background: #fff;
    display: flex;
    align-items: center;
    justify-content: center;
    flex: none;
    box-shadow: 0 1px 3px rgba(0, 0, 0, 0.05);
}
.logo {
    width: 30px;
    height: 30px;
}
.logo-sm {
    width: 27px;
    height: 27px;
}
.logo-git {
    width: 28px;
    height: 28px;
}
.logo-hf {
    width: 25px;
    height: 25px;
}
.card-text {
    margin: 4px 0 0 8.5px;
    flex: 1;
}
.card-text h3 {
    font-size: 16.5px;
    font-weight: 400;
    line-height: 20px;
    letter-spacing: -0.02em;
    word-spacing: -0.14em;
}
.card-text p {
    font-size: 12.5px;
    line-height: 17px;
    color: #6d7078;
    letter-spacing: -0.033em;
    word-spacing: -0.12em;
}
.badge {
    margin-top: 11px;
    height: 23px;
    padding: 0 8.5px;
    border-radius: 6px;
    background: #f3f3f3;
    font-size: 13px;
    letter-spacing: -0.02em;
    line-height: 23px;
    color: #555;
}
.card-foot {
    font-size: 14.5px;
    line-height: 20px;
    color: #55585f;
}
.drag-handle {
    position: absolute;
    left: 267px;
    top: 360px;
    width: 12px;
    height: 16px;
    border-radius: 3px;
    background: #eaebf1;
    display: grid;
    grid-template-columns: 2px 2px;
    gap: 1.5px 2px;
    align-content: center;
    justify-content: center;
}
.drag-handle i {
    width: 2px;
    height: 2px;
    background: #6b6e76;
    border-radius: 50%;
}
.hubspot-tab {
    position: absolute;
    right: 0;
    top: 304px;
    width: 42px;
    height: 40px;
    border: 1px solid #a8a8a8;
    border-right: 0;
    border-radius: 20px 0 0 20px;
    background: #fff;
    display: flex;
    align-items: center;
    padding-left: 9px;
}
.hubspot-tab svg {
    width: 25px;
    height: 25px;
}
```
